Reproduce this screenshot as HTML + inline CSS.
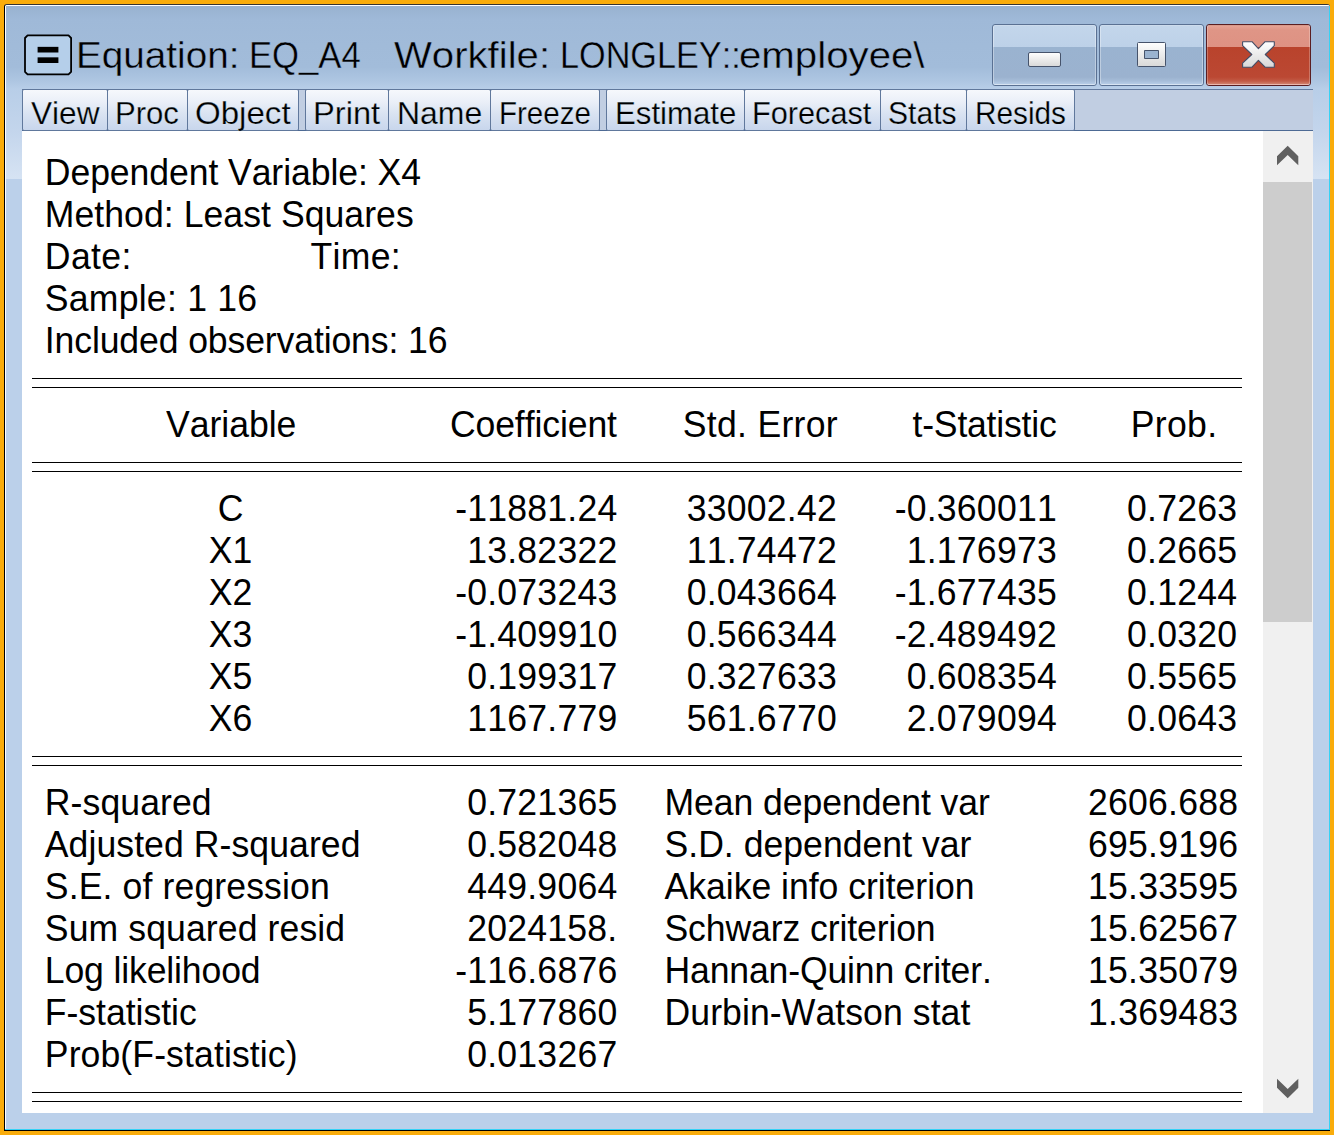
<!DOCTYPE html>
<html>
<head>
<meta charset="utf-8">
<title>Equation: EQ_A4</title>
<style>
html,body{margin:0;padding:0;}
body{width:1334px;height:1135px;background:#f9ac0b;position:relative;overflow:hidden;font-family:"Liberation Sans",sans-serif;color:#000;}
#win{position:absolute;left:4px;top:4px;width:1326px;height:1127px;background:#bbd0ea;box-sizing:border-box;border-left:1px solid #000;border-top:1px solid #333;border-bottom:1px solid #000;border-radius:3px 3px 0 0;overflow:hidden;}
#titlebg{position:absolute;left:0;top:0;width:1326px;height:174px;background:linear-gradient(#98b1cf 0px,#9fb9d8 14px,#a1bbd9 40px,#a2bcda 62px,#aec6e2 76px,#b8cee8 84px,#c3d5ec 125px,#d6e3f3 174px);}
#hl-top{position:absolute;left:1px;top:0;width:1323px;height:1px;background:#fff;}
#hl-left{position:absolute;left:0;top:1px;width:1px;height:1124px;background:#fff;}
#hl-right{position:absolute;left:1324px;top:1px;width:1px;height:1124px;background:#35d2f5;}
#hl-bot{position:absolute;left:0;top:1124px;width:1325px;height:1px;background:#35d2f5;}
#icon{position:absolute;left:19px;top:29px;width:48px;height:42px;}
.tt,.tl{position:absolute;white-space:nowrap;font-kerning:none;transform-origin:0 0;}
.tt{-webkit-text-stroke:0.4px #a2bcda;}
.tl{-webkit-text-stroke:0.25px #dfe7f4;}
.cap{position:absolute;top:19px;width:105px;height:62px;box-sizing:border-box;border:1px solid #5a7193;border-radius:3px;overflow:hidden;}
.cap .in{position:absolute;left:0;top:0;right:0;bottom:0;border:1px solid rgba(255,255,255,0.35);border-radius:2px;}
.cap.b .in{background:linear-gradient(#c3d6eb 0,#bdd1e8 21px,#9ab3d0 21px,#9bb2cf 51px,#a6bdd9 55px,#b6cce6 58px);}
.cap.x{border-color:#5a1e22;}
.cap.x .in{background:linear-gradient(#e6a294 0,#df9586 4px,#de9283 21px,#b9432c 21px,#bb4833 51px,#c25a45 55px,#cf7f6b 58px);border-color:rgba(255,255,255,0.25);}
#toolbar{position:absolute;left:17px;top:84px;width:1291px;height:42px;background:#c1cee2;box-sizing:border-box;border-top:1px solid #62799d;border-bottom:1px solid #4d6a94;}
.tb{position:absolute;top:-1px;height:42px;box-sizing:border-box;border:1px solid #60789c;background:linear-gradient(#f6f8fc 0,#eaeff8 30%,#d9e3f2 60%,#c8d6ec 100%);border-radius:2px;}
.sep{position:absolute;top:0;height:40px;background:#c1cee2;}
#content{position:absolute;left:17px;top:126px;width:1241px;height:982px;background:#fff;overflow:hidden;}
#scroll{position:absolute;left:1258px;top:126px;width:50px;height:982px;background:#f0f0f0;}
#thumb{position:absolute;left:0;top:51px;width:49px;height:440px;background:#cdcdcd;}
.t{position:absolute;font-size:35.6px;line-height:42px;transform-origin:0 33.0px;white-space:nowrap;font-kerning:none;}
.r{text-align:right;}
.c{text-align:center;}
.hr{position:absolute;left:10px;width:1210px;height:1px;background:#000;}
</style>
</head>
<body>
<div id="win">
<div id="titlebg"></div>
<div id="hl-top"></div><div id="hl-left"></div><div id="hl-right"></div><div id="hl-bot"></div>
<div id="toolbar">
<div class="tb" style="left:0px;width:86px"></div>
<div class="tb" style="left:85px;width:81px"></div>
<div class="tb" style="left:165px;width:112px"></div>
<div class="tb" style="left:283px;width:84px"></div>
<div class="tb" style="left:366px;width:103px"></div>
<div class="tb" style="left:468px;width:110px"></div>
<div class="tb" style="left:584px;width:139px"></div>
<div class="tb" style="left:722px;width:137px"></div>
<div class="tb" style="left:858px;width:87px"></div>
<div class="tb" style="left:944px;width:109px"></div>
<div class="sep" style="left:277px;width:6px"></div><div class="sep" style="left:578px;width:6px"></div>
</div>
<div id="content">
<div id="i0" class="t" style="left:22.80px;top:20.70px;letter-spacing:-0.076px;transform:scaleY(1.012);">Dependent Variable: X4</div>
<div id="i1" class="t" style="left:22.80px;top:62.70px;letter-spacing:0.053px;transform:scaleY(1.012);">Method: Least Squares</div>
<div id="i2" class="t" style="left:22.80px;top:104.70px;letter-spacing:0.395px;transform:scaleY(1.012);">Date:</div>
<div id="i3" class="t" style="left:288.50px;top:104.70px;letter-spacing:0.319px;transform:scaleY(1.012);">Time:</div>
<div id="i4" class="t" style="left:22.80px;top:146.70px;letter-spacing:0.244px;transform:scaleY(1.012);">Sample: 1 16</div>
<div id="i5" class="t" style="left:22.80px;top:188.70px;letter-spacing:-0.118px;transform:scaleY(1.012);">Included observations: 16</div>
<div class="hr" style="top:247px"></div>
<div class="hr" style="top:256px"></div>
<div id="i6" class="t c" style="left:9.18px;width:400px;top:272.80px;letter-spacing:-0.049px;transform:scaleY(1.012);">Variable</div>
<div id="i7" class="t r" style="right:646.10px;top:272.80px;letter-spacing:-0.097px;transform:scaleY(1.012);">Coefficient</div>
<div id="i8" class="t r" style="right:425.00px;top:272.80px;letter-spacing:0.303px;transform:scaleY(1.012);">Std. Error</div>
<div id="i9" class="t r" style="right:206.52px;top:272.80px;letter-spacing:-0.218px;transform:scaleY(1.012);">t-Statistic</div>
<div id="i10" class="t r" style="right:45.58px;top:272.80px;letter-spacing:0.324px;transform:scaleY(1.012);">Prob.</div>
<div class="hr" style="top:331px"></div>
<div class="hr" style="top:340px"></div>
<div id="i11" class="t c" style="left:8.60px;width:400px;top:357.00px;letter-spacing:0.000px;transform:scaleY(1.012);">C</div>
<div id="i12" class="t r" style="right:645.57px;top:357.00px;letter-spacing:0.230px;transform:scaleY(1.055);">-11881.24</div>
<div id="i13" class="t r" style="right:426.07px;top:357.00px;letter-spacing:0.230px;transform:scaleY(1.055);">33002.42</div>
<div id="i14" class="t r" style="right:206.07px;top:357.00px;letter-spacing:0.230px;transform:scaleY(1.055);">-0.360011</div>
<div id="i15" class="t r" style="right:25.77px;top:357.00px;letter-spacing:0.230px;transform:scaleY(1.055);">0.7263</div>
<div id="i16" class="t c" style="left:8.60px;width:400px;top:399.00px;letter-spacing:0.000px;transform:scaleY(1.012);">X1</div>
<div id="i17" class="t r" style="right:645.57px;top:399.00px;letter-spacing:0.230px;transform:scaleY(1.055);">13.82322</div>
<div id="i18" class="t r" style="right:426.07px;top:399.00px;letter-spacing:0.230px;transform:scaleY(1.055);">11.74472</div>
<div id="i19" class="t r" style="right:206.07px;top:399.00px;letter-spacing:0.230px;transform:scaleY(1.055);">1.176973</div>
<div id="i20" class="t r" style="right:25.77px;top:399.00px;letter-spacing:0.230px;transform:scaleY(1.055);">0.2665</div>
<div id="i21" class="t c" style="left:8.60px;width:400px;top:441.00px;letter-spacing:0.000px;transform:scaleY(1.012);">X2</div>
<div id="i22" class="t r" style="right:645.57px;top:441.00px;letter-spacing:0.230px;transform:scaleY(1.055);">-0.073243</div>
<div id="i23" class="t r" style="right:426.07px;top:441.00px;letter-spacing:0.230px;transform:scaleY(1.055);">0.043664</div>
<div id="i24" class="t r" style="right:206.07px;top:441.00px;letter-spacing:0.230px;transform:scaleY(1.055);">-1.677435</div>
<div id="i25" class="t r" style="right:25.77px;top:441.00px;letter-spacing:0.230px;transform:scaleY(1.055);">0.1244</div>
<div id="i26" class="t c" style="left:8.60px;width:400px;top:483.00px;letter-spacing:0.000px;transform:scaleY(1.012);">X3</div>
<div id="i27" class="t r" style="right:645.57px;top:483.00px;letter-spacing:0.230px;transform:scaleY(1.055);">-1.409910</div>
<div id="i28" class="t r" style="right:426.07px;top:483.00px;letter-spacing:0.230px;transform:scaleY(1.055);">0.566344</div>
<div id="i29" class="t r" style="right:206.07px;top:483.00px;letter-spacing:0.230px;transform:scaleY(1.055);">-2.489492</div>
<div id="i30" class="t r" style="right:25.77px;top:483.00px;letter-spacing:0.230px;transform:scaleY(1.055);">0.0320</div>
<div id="i31" class="t c" style="left:8.60px;width:400px;top:525.00px;letter-spacing:0.000px;transform:scaleY(1.012);">X5</div>
<div id="i32" class="t r" style="right:645.57px;top:525.00px;letter-spacing:0.230px;transform:scaleY(1.055);">0.199317</div>
<div id="i33" class="t r" style="right:426.07px;top:525.00px;letter-spacing:0.230px;transform:scaleY(1.055);">0.327633</div>
<div id="i34" class="t r" style="right:206.07px;top:525.00px;letter-spacing:0.230px;transform:scaleY(1.055);">0.608354</div>
<div id="i35" class="t r" style="right:25.77px;top:525.00px;letter-spacing:0.230px;transform:scaleY(1.055);">0.5565</div>
<div id="i36" class="t c" style="left:8.60px;width:400px;top:567.00px;letter-spacing:0.000px;transform:scaleY(1.012);">X6</div>
<div id="i37" class="t r" style="right:645.57px;top:567.00px;letter-spacing:0.230px;transform:scaleY(1.055);">1167.779</div>
<div id="i38" class="t r" style="right:426.07px;top:567.00px;letter-spacing:0.230px;transform:scaleY(1.055);">561.6770</div>
<div id="i39" class="t r" style="right:206.07px;top:567.00px;letter-spacing:0.230px;transform:scaleY(1.055);">2.079094</div>
<div id="i40" class="t r" style="right:25.77px;top:567.00px;letter-spacing:0.230px;transform:scaleY(1.055);">0.0643</div>
<div class="hr" style="top:625px"></div>
<div class="hr" style="top:634px"></div>
<div id="i41" class="t" style="left:22.80px;top:650.80px;letter-spacing:0.088px;transform:scaleY(1.012);">R-squared</div>
<div id="i42" class="t r" style="right:645.57px;top:650.80px;letter-spacing:0.230px;transform:scaleY(1.055);">0.721365</div>
<div id="i43" class="t" style="left:642.50px;top:650.80px;letter-spacing:-0.057px;transform:scaleY(1.012);">Mean dependent var</div>
<div id="i44" class="t r" style="right:24.77px;top:650.80px;letter-spacing:0.230px;transform:scaleY(1.055);">2606.688</div>
<div id="i45" class="t" style="left:22.80px;top:692.80px;letter-spacing:0.074px;transform:scaleY(1.012);">Adjusted R-squared</div>
<div id="i46" class="t r" style="right:645.57px;top:692.80px;letter-spacing:0.230px;transform:scaleY(1.055);">0.582048</div>
<div id="i47" class="t" style="left:642.50px;top:692.80px;letter-spacing:0.020px;transform:scaleY(1.012);">S.D. dependent var</div>
<div id="i48" class="t r" style="right:24.77px;top:692.80px;letter-spacing:0.230px;transform:scaleY(1.055);">695.9196</div>
<div id="i49" class="t" style="left:22.80px;top:734.80px;letter-spacing:0.128px;transform:scaleY(1.012);">S.E. of regression</div>
<div id="i50" class="t r" style="right:645.57px;top:734.80px;letter-spacing:0.230px;transform:scaleY(1.055);">449.9064</div>
<div id="i51" class="t" style="left:642.50px;top:734.80px;letter-spacing:-0.019px;transform:scaleY(1.012);">Akaike info criterion</div>
<div id="i52" class="t r" style="right:24.77px;top:734.80px;letter-spacing:0.230px;transform:scaleY(1.055);">15.33595</div>
<div id="i53" class="t" style="left:22.80px;top:776.80px;letter-spacing:0.106px;transform:scaleY(1.012);">Sum squared resid</div>
<div id="i54" class="t r" style="right:645.57px;top:776.80px;letter-spacing:0.230px;transform:scaleY(1.055);">2024158.</div>
<div id="i55" class="t" style="left:642.50px;top:776.80px;letter-spacing:-0.106px;transform:scaleY(1.012);">Schwarz criterion</div>
<div id="i56" class="t r" style="right:24.77px;top:776.80px;letter-spacing:0.230px;transform:scaleY(1.055);">15.62567</div>
<div id="i57" class="t" style="left:22.80px;top:818.80px;letter-spacing:-0.139px;transform:scaleY(1.012);">Log likelihood</div>
<div id="i58" class="t r" style="right:645.57px;top:818.80px;letter-spacing:0.230px;transform:scaleY(1.055);">-116.6876</div>
<div id="i59" class="t" style="left:642.50px;top:818.80px;letter-spacing:-0.153px;transform:scaleY(1.012);">Hannan-Quinn criter.</div>
<div id="i60" class="t r" style="right:24.77px;top:818.80px;letter-spacing:0.230px;transform:scaleY(1.055);">15.35079</div>
<div id="i61" class="t" style="left:22.80px;top:860.80px;letter-spacing:-0.032px;transform:scaleY(1.012);">F-statistic</div>
<div id="i62" class="t r" style="right:645.57px;top:860.80px;letter-spacing:0.230px;transform:scaleY(1.055);">5.177860</div>
<div id="i63" class="t" style="left:642.50px;top:860.80px;letter-spacing:0.081px;transform:scaleY(1.012);">Durbin-Watson stat</div>
<div id="i64" class="t r" style="right:24.77px;top:860.80px;letter-spacing:0.230px;transform:scaleY(1.055);">1.369483</div>
<div id="i65" class="t" style="left:22.80px;top:902.80px;letter-spacing:0.106px;transform:scaleY(1.012);">Prob(F-statistic)</div>
<div id="i66" class="t r" style="right:645.57px;top:902.80px;letter-spacing:0.230px;transform:scaleY(1.055);">0.013267</div>
<div class="hr" style="top:961px"></div>
<div class="hr" style="top:970px"></div>
</div>
<div id="i67" class="tt" style="left:70.83px;top:30.40px;font-size:36.5px;line-height:41px;transform:scaleX(1.0593)">Equation:</div>
<div id="i68" class="tt" style="left:243.87px;top:30.40px;font-size:36.5px;line-height:41px;transform:scaleX(0.9495)">EQ_A4</div>
<div id="i69" class="tt" style="left:388.53px;top:30.40px;font-size:36.5px;line-height:41px;transform:scaleX(1.0991)">Workfile:</div>
<div id="i70" class="tt" style="left:554.90px;top:30.40px;font-size:36.5px;line-height:41px;transform:scaleX(0.9377)">LONGLEY::</div>
<div id="i71" class="tt" style="left:734.35px;top:30.40px;font-size:36.5px;line-height:41px;transform:scaleX(1.1018)">employee\</div>
<div id="i72" class="tl" style="left:25.65px;top:90.00px;font-size:32px;line-height:36px;transform:scaleX(0.9881)">View</div>
<div id="i73" class="tl" style="left:110.07px;top:90.00px;font-size:32px;line-height:36px;transform:scaleX(0.9713)">Proc</div>
<div id="i74" class="tl" style="left:189.73px;top:90.00px;font-size:32px;line-height:36px;transform:scaleX(1.0335)">Object</div>
<div id="i75" class="tl" style="left:307.76px;top:90.00px;font-size:32px;line-height:36px;transform:scaleX(1.0202)">Print</div>
<div id="i76" class="tl" style="left:391.82px;top:90.00px;font-size:32px;line-height:36px;transform:scaleX(0.9989)">Name</div>
<div id="i77" class="tl" style="left:493.62px;top:90.00px;font-size:32px;line-height:36px;transform:scaleX(0.9224)">Freeze</div>
<div id="i78" class="tl" style="left:609.67px;top:90.00px;font-size:32px;line-height:36px;transform:scaleX(0.9752)">Estimate</div>
<div id="i79" class="tl" style="left:747.08px;top:90.00px;font-size:32px;line-height:36px;transform:scaleX(0.9587)">Forecast</div>
<div id="i80" class="tl" style="left:883.28px;top:90.00px;font-size:32px;line-height:36px;transform:scaleX(0.9406)">Stats</div>
<div id="i81" class="tl" style="left:969.90px;top:90.00px;font-size:32px;line-height:36px;transform:scaleX(0.9302)">Resids</div>
<svg id="icon" viewBox="0 0 48 42"><path d="M3.6 1.4H44.5L47.1 4V37.8L44.5 40.4H3.6L1 37.8V4Z" fill="#b5cfea" stroke="#000" stroke-width="1.8" stroke-linejoin="round"/><rect x="13.6" y="12.85" width="20.8" height="5.65" fill="#000"/><rect x="13.6" y="23.35" width="20.8" height="5.65" fill="#000"/></svg>
<div class="cap b" style="left:987px"><div class="in"></div></div>
<div class="cap b" style="left:1094px"><div class="in"></div></div>
<div class="cap x" style="left:1201px"><div class="in"></div></div>
<svg style="position:absolute;left:1022px;top:46px" width="36" height="18" viewBox="0 0 36 18"><defs><linearGradient id="gw" x1="0" y1="0" x2="0" y2="1"><stop offset="0" stop-color="#ffffff"/><stop offset="1" stop-color="#d8d8d8"/></linearGradient></defs><rect x="1.5" y="1.5" width="32" height="14" rx="1.5" fill="url(#gw)" stroke="#46536b" stroke-width="1"/></svg>
<svg style="position:absolute;left:1131px;top:36px" width="32" height="28" viewBox="0 0 32 28"><path fill-rule="evenodd" d="M2.5 1.5h26a1 1 0 0 1 1 1v22a1 1 0 0 1-1 1h-26a1 1 0 0 1-1-1v-22a1 1 0 0 1 1-1zM8.5 9.5v8h14v-8z" fill="url(#gw)" stroke="#46536b" stroke-width="1"/></svg>
<svg style="position:absolute;left:1236px;top:35px" width="36" height="30" viewBox="0 0 36 30"><path d="M1.6 1.7H11L17.4 8.6 24.1 1.7H33.3V5.7L24.3 14.5 33.3 23.1V27.2H24.1L17.4 20.3 11 27.2H1.6V23.1L10.8 14.5 1.6 5.7Z" fill="url(#gw)" stroke="#434d66" stroke-width="1.1" stroke-linejoin="round"/></svg>
<div id="scroll"><div id="thumb"></div>
<svg style="position:absolute;left:13px;top:14px" width="24" height="22" viewBox="0 0 24 22"><path d="M1 11.2L11.7 0.7 22.3 11.2V20.2L11.7 9.9 1 20.2z" fill="#606060"/></svg>
<svg style="position:absolute;left:13px;top:946px" width="24" height="22" viewBox="0 0 24 22"><path d="M1 10.8L11.7 21.3 22.3 10.8V1.8L11.7 12.1 1 1.8z" fill="#606060"/></svg>
</div>
</div>
</body>
</html>
